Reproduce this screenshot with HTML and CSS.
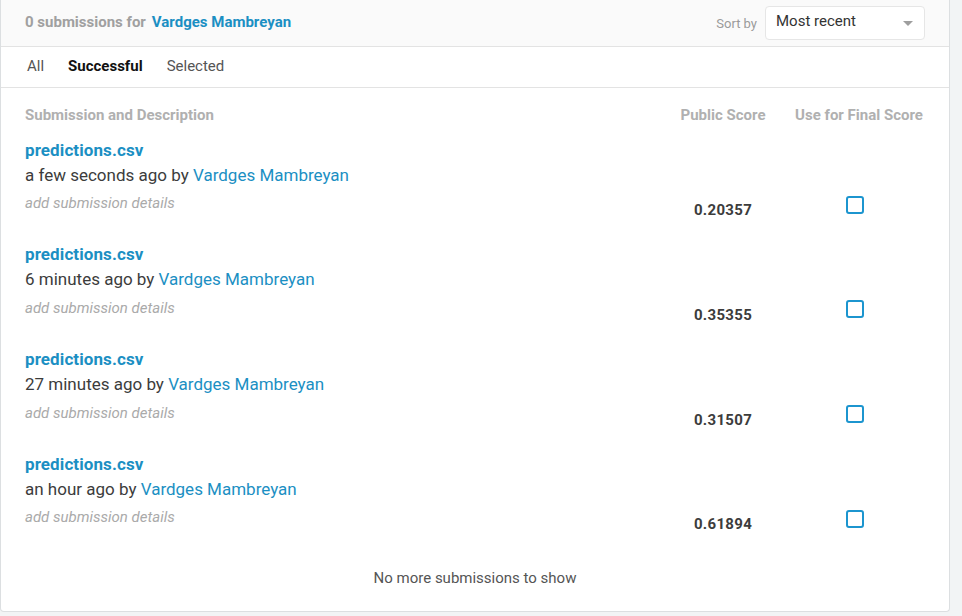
FILE: index.html
```html
<!DOCTYPE html>
<html>
<head>
<meta charset="utf-8">
<link rel="stylesheet" href="styles.css">
</head>
<body>
<div class="card">
  <div class="head">
    <div class="title"><span class="muted">0 submissions for</span><a class="user">Vardges Mambreyan</a></div>
    <div class="sort">
      <span class="sort-label">Sort by</span>
      <div class="select"><span>Most recent</span><span class="caret"></span></div>
    </div>
  </div>
  <div class="tabs">
    <span class="tab">All</span>
    <span class="tab active">Successful</span>
    <span class="tab">Selected</span>
  </div>
  <div class="table">
    <div class="thead">
      <div>Submission and Description</div>
      <div class="c-score">Public Score</div>
      <div class="c-final">Use for Final Score</div>
    </div>
    <div class="row">
      <div class="desc">
        <a class="file">predictions.csv</a>
        <div class="meta">a few seconds ago by <a class="user-link">Vardges Mambreyan</a></div>
        <div class="details">add submission details</div>
      </div>
      <div class="score">0.20357</div>
      <div class="final"><span class="check"></span></div>
    </div>
    <div class="row">
      <div class="desc">
        <a class="file">predictions.csv</a>
        <div class="meta">6 minutes ago by <a class="user-link">Vardges Mambreyan</a></div>
        <div class="details">add submission details</div>
      </div>
      <div class="score">0.35355</div>
      <div class="final"><span class="check"></span></div>
    </div>
    <div class="row">
      <div class="desc">
        <a class="file">predictions.csv</a>
        <div class="meta">27 minutes ago by <a class="user-link">Vardges Mambreyan</a></div>
        <div class="details">add submission details</div>
      </div>
      <div class="score">0.31507</div>
      <div class="final"><span class="check"></span></div>
    </div>
    <div class="row">
      <div class="desc">
        <a class="file">predictions.csv</a>
        <div class="meta">an hour ago by <a class="user-link">Vardges Mambreyan</a></div>
        <div class="details">add submission details</div>
      </div>
      <div class="score">0.61894</div>
      <div class="final"><span class="check"></span></div>
    </div>
    <div class="foot">No more submissions to show</div>
  </div>
</div>
</body>
</html>
```
FILE: styles.css
```css
html, body {
  margin: 0;
  padding: 0;
  background: #f2f4f5;
  font-family: Roboto, "Liberation Sans", Arial, sans-serif;
  color: #3c3c3c;
}
.card {
  width: 948px;
  background: #fff;
  border: 1px solid #dcdfe1;
  border-top: 0;
  border-radius: 0 0 4px 4px;
}
.head {
  height: 47px;
  box-sizing: border-box;
  background: #fafafa;
  border-bottom: 1px solid #e3e3e3;
  display: flex;
  align-items: center;
  justify-content: space-between;
  padding: 0 24px 0 24px;
}
.title {
  font-size: 15px;
  font-weight: 700;
  display: flex;
  gap: 6px;
  margin-top: -3px;
}
.muted { color: #a0a0a0; }
.user { color: #1b8fc3; }
.sort {
  display: flex;
  align-items: center;
  gap: 8px;
}
.sort-label {
  font-size: 13px;
  color: #9a9a9a;
}
.select {
  width: 160px;
  height: 34px;
  box-sizing: border-box;
  border: 1px solid #e6e6e6;
  border-radius: 4px;
  background: #fff;
  display: flex;
  align-items: center;
  justify-content: space-between;
  padding: 0 11px 0 10px;
  font-size: 15px;
  color: #333;
  margin-top: -1px;
}
.select span:first-child { margin-top: -4px; }
.caret {
  width: 0;
  height: 0;
  border-left: 5px solid transparent;
  border-right: 5px solid transparent;
  border-top: 5px solid #9e9e9e;
  margin-top: 2px;
}
.tabs {
  height: 41px;
  box-sizing: border-box;
  border-bottom: 1px solid #e3e3e3;
  display: flex;
  align-items: center;
  gap: 24px;
  padding-left: 26px;
  padding-bottom: 2px;
  font-size: 15px;
  color: #555;
}
.tab.active { color: #111; font-weight: 700; }
.thead, .row {
  display: grid;
  grid-template-columns: 1fr 126px 144px;
  padding: 0 19px 0 24px;
}
.thead {
  padding-top: 17px;
  font-size: 15px;
  font-weight: 700;
  color: #b0b0b0;
  line-height: 20px;
}
.c-score, .c-final { text-align: center; }
.c-final { padding-left: 2px; }
.row {
  padding-top: 12.5px;
  padding-bottom: 9.8px;
}
.desc { display: flex; flex-direction: column; align-items: flex-start; }
.file {
  font-size: 17px;
  font-weight: 700;
  line-height: 25px;
  letter-spacing: 0.1px;
  color: #1b8fc3;
}
.meta {
  font-size: 17px;
  line-height: 25px;
  color: #3c3c3c;
}
.user-link { color: #1b8fc3; }
.details {
  margin-top: 5.5px;
  font-size: 15px;
  line-height: 20px;
  font-style: italic;
  color: #aaa;
}
.score {
  padding-top: 62.5px;
  font-size: 15px;
  line-height: 20px;
  font-weight: 700;
  letter-spacing: 0.3px;
  text-align: center;
  color: #3c3c3c;
}
.final {
  padding-top: 58px;
  padding-right: 6px;
  display: flex;
  justify-content: center;
}
.check {
  display: block;
  width: 18px;
  height: 18px;
  box-sizing: border-box;
  border: 2px solid #1c95cf;
  border-radius: 3px;
}
.foot {
  text-align: center;
  font-size: 15px;
  line-height: 20px;
  color: #555;
  padding: 24px 0 23px;
}
```
